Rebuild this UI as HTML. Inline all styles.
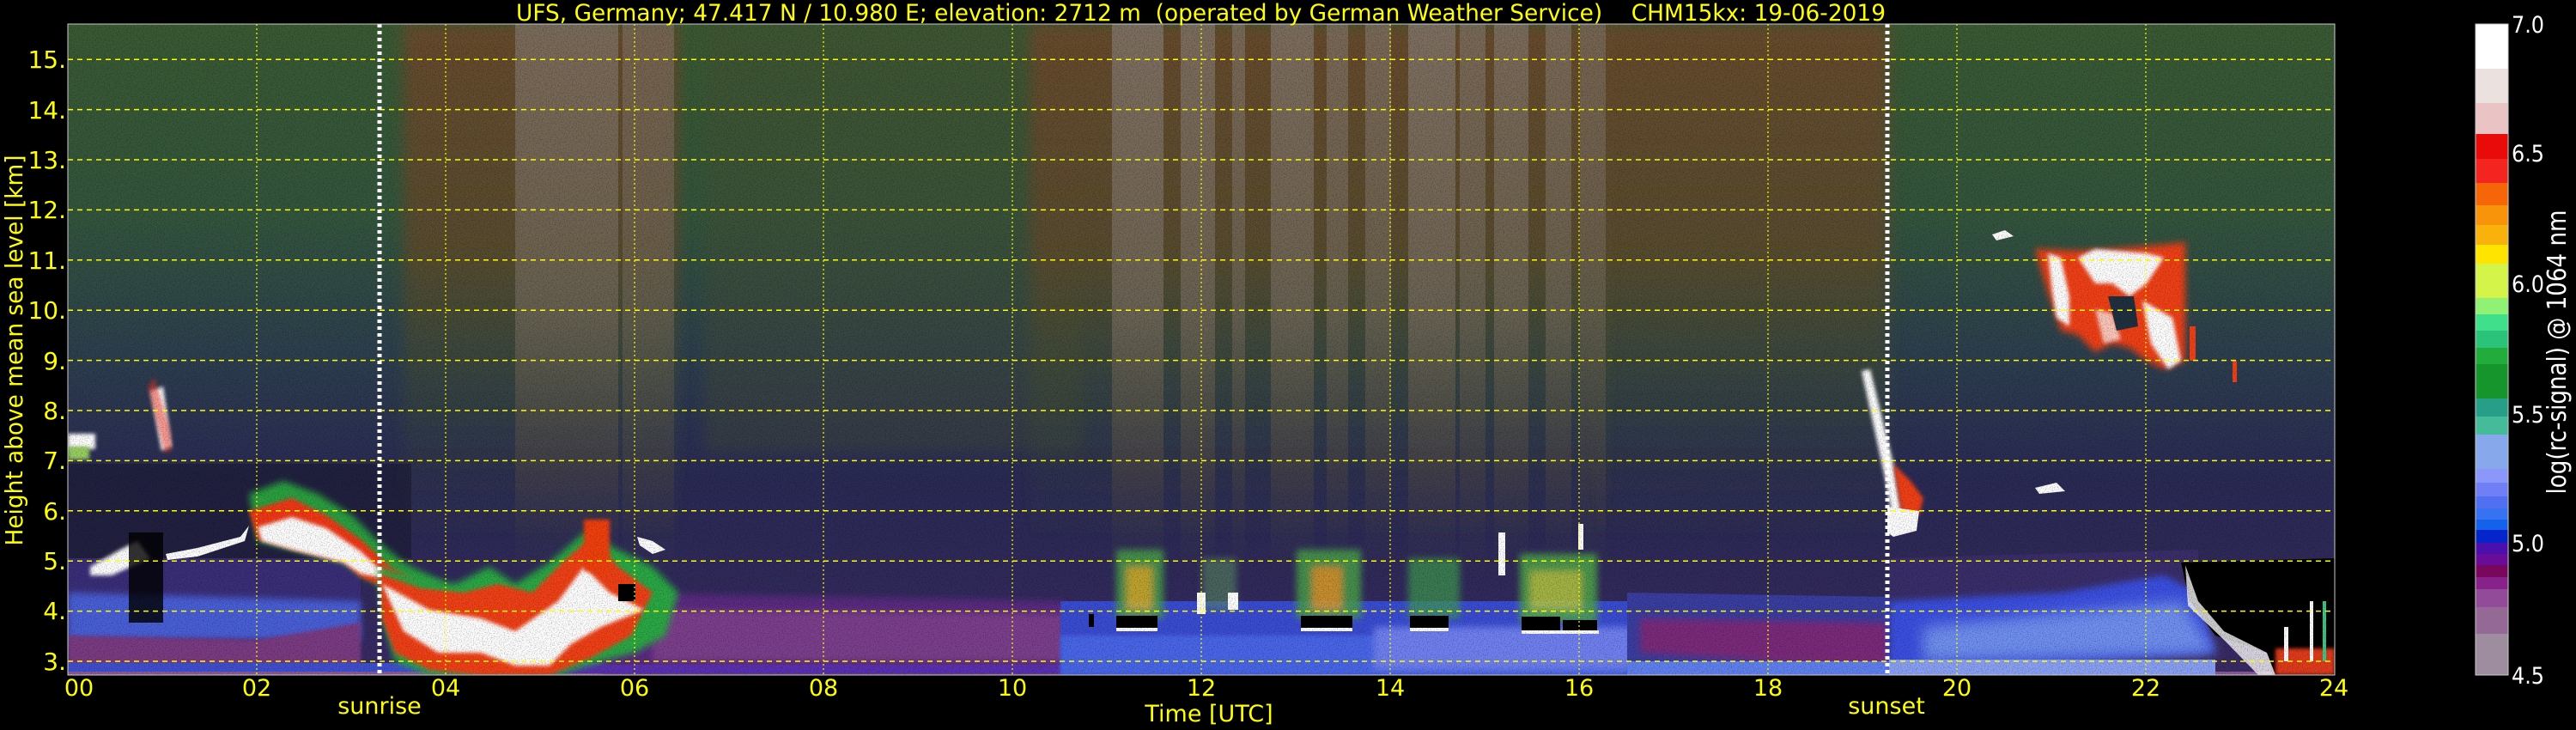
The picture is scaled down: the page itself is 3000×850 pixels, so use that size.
<!DOCTYPE html>
<html><head><meta charset="utf-8"><style>
html,body{margin:0;padding:0;background:#000;width:3000px;height:850px;overflow:hidden}
svg{display:block}
text{font-family:"DejaVu Sans","Liberation Sans",sans-serif}
</style></head><body>
<svg width="3000" height="850" viewBox="0 0 3000 850" xmlns="http://www.w3.org/2000/svg">
<defs>
<linearGradient id="base" x1="0" y1="28" x2="0" y2="786" gradientUnits="userSpaceOnUse">
<stop offset="0" stop-color="#3a5a33"/>
<stop offset="0.3" stop-color="#33553d"/>
<stop offset="0.5" stop-color="#2d404e"/>
<stop offset="0.7" stop-color="#2a2a55"/>
<stop offset="0.85" stop-color="#302a5a"/>
<stop offset="1" stop-color="#3a2a66"/>
</linearGradient>
<linearGradient id="brown" x1="0" y1="28" x2="0" y2="786" gradientUnits="userSpaceOnUse">
<stop offset="0" stop-color="#6a4a2c" stop-opacity="0.95"/>
<stop offset="0.35" stop-color="#5e4a2c" stop-opacity="0.85"/>
<stop offset="0.6" stop-color="#40502e" stop-opacity="0.3"/>
<stop offset="0.8" stop-color="#40502e" stop-opacity="0"/>
</linearGradient>
<linearGradient id="gray" x1="0" y1="28" x2="0" y2="786" gradientUnits="userSpaceOnUse">
<stop offset="0" stop-color="#857a70" stop-opacity="0.9"/>
<stop offset="0.45" stop-color="#7a6e62" stop-opacity="0.8"/>
<stop offset="0.7" stop-color="#6a5a40" stop-opacity="0.35"/>
<stop offset="0.85" stop-color="#405040" stop-opacity="0"/>
</linearGradient>
<filter id="b2" x="-20%" y="-20%" width="140%" height="140%"><feGaussianBlur stdDeviation="2"/></filter>
<filter id="b4" x="-20%" y="-20%" width="140%" height="140%"><feGaussianBlur stdDeviation="4"/></filter>
<filter id="b8" x="-20%" y="-20%" width="140%" height="140%"><feGaussianBlur stdDeviation="8"/></filter>
<filter id="noise" x="0" y="0" width="1" height="1">
<feTurbulence type="fractalNoise" baseFrequency="0.8" numOctaves="1" seed="3"/>
<feColorMatrix values="0 0 0 0 0  0 0 0 0 0  0 0 0 0 0  -2 0 0 0 1.1"/>
</filter>
<clipPath id="plot"><rect x="79" y="28" width="2640" height="758"/></clipPath>
</defs>

<g clip-path="url(#plot)">
<rect x="79" y="28" width="2640" height="758" fill="url(#base)"/>
<rect x="820" y="28" width="440" height="500" fill="#4a5030" opacity="0.35" filter="url(#b8)"/>
<rect x="470" y="28" width="320" height="758" fill="url(#brown)" filter="url(#b8)"/>
<rect x="1860" y="28" width="340" height="758" fill="url(#brown)" filter="url(#b8)"/>
<rect x="1200" y="28" width="670" height="758" fill="url(#brown)" filter="url(#b8)"/>
<g fill="url(#gray)">
<rect x="600" y="28" width="120" height="758" opacity="0.75"/>
<rect x="725" y="28" width="60" height="758" opacity="0.6"/>
<rect x="1295" y="28" width="60" height="758" opacity="0.85"/>
<rect x="1375" y="28" width="40" height="758" opacity="0.8"/>
<rect x="1435" y="28" width="15" height="758" opacity="0.7"/>
<rect x="1480" y="28" width="50" height="758" opacity="0.8"/>
<rect x="1545" y="28" width="25" height="758" opacity="0.7"/>
<rect x="1590" y="28" width="30" height="758" opacity="0.7"/>
<rect x="1640" y="28" width="55" height="758" opacity="0.85"/>
<rect x="1700" y="28" width="30" height="758" opacity="0.7"/>
<rect x="1740" y="28" width="40" height="758" opacity="0.75"/>
<rect x="1800" y="28" width="30" height="758" opacity="0.7"/>
<rect x="1840" y="28" width="30" height="758" opacity="0.6"/>
</g>
<polygon points="79,650 420,650 420,786 79,786" fill="#3a2e78"/>
<polygon points="79,690 420,700 420,745 79,745" fill="#4a5ed6" filter="url(#b4)"/>
<polygon points="79,740 300,745 420,725 420,775 79,775" fill="#7a3a82" filter="url(#b2)"/>
<rect x="79" y="772" width="700" height="14" fill="#3e50d0"/>
<rect x="79" y="782" width="2640" height="4" fill="#8a5a9a"/>
<polygon points="700,690 1240,700 1240,786 700,786" fill="#5a2a80" filter="url(#b4)"/>
<polygon points="760,710 1240,715 1240,770 760,770" fill="#8a4a92" opacity="0.7" filter="url(#b4)"/>
<rect x="640" y="774" width="1600" height="10" fill="#5a30b0"/>
<rect x="1235" y="700" width="660" height="86" fill="#3a4cd2"/>
<rect x="1235" y="740" width="660" height="46" fill="#4a66e8" filter="url(#b2)"/>
<rect x="1600" y="730" width="300" height="50" fill="#7080f0" filter="url(#b4)"/>
<polygon points="1895,690 2200,695 2200,786 1895,786" fill="#3a3ea0"/>
<polygon points="1910,720 2200,725 2200,780 1910,760" fill="#7a2a7a" filter="url(#b4)"/>
<rect x="1895" y="770" width="320" height="16" fill="#6080f0"/>
<polygon points="2200,650 2560,640 2560,786 2200,786" fill="#3a2e6a"/>
<polygon points="2200,700 2400,690 2520,670 2560,690 2580,760 2200,786" fill="#3a50e0" filter="url(#b4)"/>
<polygon points="2240,730 2540,700 2580,760 2240,770" fill="#7090f0" filter="url(#b8)"/>
<rect x="2200" y="768" width="380" height="18" fill="#8aa0f4"/>
<polygon points="2540,655 2719,650 2719,786 2650,786 2640,760 2580,740 2550,700" fill="#000"/>
<polygon points="2545,658 2560,700 2590,735 2640,760 2650,786 2630,786 2590,745 2548,705" fill="#fff" opacity="0.8"/>
<rect x="2650" y="755" width="69" height="31" fill="#e03a1a" filter="url(#b2)"/>
<rect x="2660" y="730" width="5" height="40" fill="#fff"/><rect x="2690" y="700" width="4" height="70" fill="#fff"/><rect x="2705" y="700" width="4" height="70" fill="#3c8"/>

<rect x="79" y="505" width="32" height="18" fill="#fff" filter="url(#b2)"/>
<rect x="79" y="520" width="25" height="15" fill="#9ad060" filter="url(#b2)"/>
<polygon points="175,455 190,450 200,520 188,525" fill="#fff" filter="url(#b2)"/>
<polygon points="172,450 180,440 198,500 200,525 192,528" fill="#f03020" opacity="0.5" filter="url(#b2)"/>
<rect x="79" y="540" width="400" height="110" fill="#1a1a30" opacity="0.6"/>
<polygon points="105,660 140,640 160,630 175,650 130,670 105,670" fill="#fff" filter="url(#b2)"/>
<polygon points="193,645 230,638 280,625 290,612 285,630 230,648 195,652" fill="#fff"/>
<rect x="150" y="620" width="40" height="105" fill="#000" opacity="0.8"/>
<polygon points="290,575 330,560 370,575 410,600 440,630 470,655 520,680 460,690 420,670 400,655 340,640 300,630" fill="#2ca040" filter="url(#b4)"/>
<polygon points="290,595 340,580 380,600 420,628 455,660 500,685 460,690 420,672 400,655 340,640 300,628" fill="#f03818" filter="url(#b2)"/>
<polygon points="300,614 340,602 380,615 420,642 455,675 420,668 400,655 340,640 305,630" fill="#fff" filter="url(#b2)"/>
<polygon points="440,660 480,670 530,680 570,660 600,680 640,655 680,620 720,640 760,660 790,690 775,740 740,760 700,770 650,786 560,786 500,786 460,770 445,720" fill="#2ca844" filter="url(#b4)"/>
<polygon points="442,668 490,685 540,690 580,680 620,690 660,650 690,625 720,660 760,690 735,740 690,765 640,786 560,786 500,780 460,760 445,720" fill="#f04018" filter="url(#b2)"/>
<polygon points="445,680 500,710 560,720 600,735 650,700 680,660 710,690 750,710 700,730 665,750 640,775 600,775 560,760 510,760 470,735" fill="#fff" filter="url(#b2)"/>
<rect x="680" y="605" width="30" height="60" fill="#f04010" filter="url(#b2)"/>
<polygon points="742,625 760,630 775,640 760,645 745,635" fill="#fff"/>
<rect x="720" y="680" width="20" height="20" fill="#000"/>
<g filter="url(#b4)" opacity="0.85">
<rect x="1300" y="640" width="55" height="80" fill="#4aa048"/>
<rect x="1312" y="660" width="30" height="50" fill="#d8b828"/>
<rect x="1510" y="640" width="75" height="80" fill="#4aa048"/>
<rect x="1528" y="660" width="35" height="50" fill="#e0a028"/>
<rect x="1770" y="645" width="90" height="80" fill="#50a848"/>
<rect x="1782" y="665" width="60" height="45" fill="#b8cc40"/>
<rect x="1640" y="650" width="60" height="70" fill="#40a050" opacity="0.8"/>
<rect x="1400" y="650" width="40" height="60" fill="#5a8a60" opacity="0.7"/>
</g>
<g fill="#000">
<rect x="1300" y="717" width="48" height="14"/>
<rect x="1515" y="717" width="60" height="14"/>
<rect x="1642" y="717" width="45" height="14"/>
<rect x="1772" y="718" width="45" height="16"/>
<rect x="1820" y="722" width="40" height="14"/>
<rect x="1268" y="715" width="6" height="15"/>
</g>
<g fill="#fff">
<rect x="1300" y="731" width="48" height="4"/>
<rect x="1515" y="731" width="60" height="4"/>
<rect x="1642" y="731" width="45" height="4"/>
<rect x="1772" y="734" width="90" height="4"/>
<rect x="1745" y="620" width="8" height="50"/>
<rect x="1838" y="610" width="6" height="30"/>
<rect x="1394" y="690" width="10" height="25"/>
<rect x="1430" y="690" width="12" height="20"/>
</g>
<polygon points="2168,432 2178,430 2205,540 2215,600 2205,610 2196,560" fill="#fff" filter="url(#b2)"/>
<polygon points="2205,540 2225,560 2240,580 2235,600 2215,600" fill="#f04018" filter="url(#b2)"/>
<polygon points="2198,590 2235,595 2232,618 2205,625 2198,620" fill="#fff"/>
<polygon points="2320,273 2335,268 2345,275 2325,280" fill="#fff"/>
<polygon points="2370,568 2395,562 2405,572 2375,575" fill="#fff"/>
<polygon points="2370,290 2420,292 2460,290 2520,285 2545,282 2545,420 2520,430 2500,420 2480,405 2460,400 2440,410 2420,390 2400,385 2385,340" fill="#f04018" filter="url(#b4)"/>
<polygon points="2385,295 2400,300 2410,345 2410,380 2395,370 2390,340" fill="#fff" filter="url(#b2)"/>
<polygon points="2420,300 2440,290 2500,295 2520,300 2500,330 2480,345 2460,330 2440,330" fill="#fff" filter="url(#b2)"/>
<polygon points="2495,350 2530,370 2540,420 2525,430 2505,400" fill="#fff" filter="url(#b2)"/>
<polygon points="2440,360 2460,365 2470,395 2450,400" fill="#fff" opacity="0.7" filter="url(#b2)"/>
<polygon points="2455,345 2485,345 2490,380 2465,385" fill="#203040"/>
<rect x="2550" y="380" width="7" height="40" fill="#f04018"/>
<rect x="2600" y="420" width="5" height="25" fill="#f04018"/>
<rect x="79" y="28" width="2640" height="758" filter="url(#noise)" opacity="0.4" fill="#000"/>
</g>

<g stroke="#ffff00" stroke-width="1.5" stroke-dasharray="6,5" fill="none">
<line x1="79" y1="770" x2="2719" y2="770"/><line x1="79" y1="711.6" x2="2719" y2="711.6"/>
<line x1="79" y1="653.2" x2="2719" y2="653.2"/><line x1="79" y1="594.8" x2="2719" y2="594.8"/>
<line x1="79" y1="536.4" x2="2719" y2="536.4"/><line x1="79" y1="478" x2="2719" y2="478"/>
<line x1="79" y1="419.6" x2="2719" y2="419.6"/><line x1="79" y1="361.2" x2="2719" y2="361.2"/>
<line x1="79" y1="302.8" x2="2719" y2="302.8"/><line x1="79" y1="244.4" x2="2719" y2="244.4"/>
<line x1="79" y1="186" x2="2719" y2="186"/><line x1="79" y1="127.6" x2="2719" y2="127.6"/>
<line x1="79" y1="69.2" x2="2719" y2="69.2"/>
</g>
<g stroke="#ffff00" stroke-width="1.2" stroke-dasharray="2,3" fill="none">
<line x1="299" y1="28" x2="299" y2="786"/><line x1="519" y1="28" x2="519" y2="786"/>
<line x1="739" y1="28" x2="739" y2="786"/><line x1="959" y1="28" x2="959" y2="786"/>
<line x1="1179" y1="28" x2="1179" y2="786"/><line x1="1399" y1="28" x2="1399" y2="786"/>
<line x1="1619" y1="28" x2="1619" y2="786"/><line x1="1839" y1="28" x2="1839" y2="786"/>
<line x1="2059" y1="28" x2="2059" y2="786"/><line x1="2279" y1="28" x2="2279" y2="786"/>
<line x1="2499" y1="28" x2="2499" y2="786"/>
</g>
<g stroke="#fff" stroke-width="5" stroke-dasharray="4,4">
<line x1="442" y1="28" x2="442" y2="786"/><line x1="2198" y1="28" x2="2198" y2="786"/>
</g>
<rect x="79" y="28" width="2640" height="758" fill="none" stroke="#ccc" stroke-width="1"/>

<text x="601" y="24" font-size="27" fill="#ffff00" textLength="1595" lengthAdjust="spacingAndGlyphs" xml:space="preserve">UFS, Germany; 47.417 N / 10.980 E; elevation: 2712 m  (operated by German Weather Service)    CHM15kx: 19-06-2019</text>

<g font-size="28" fill="#ffff00" text-anchor="end">
<text x="77" y="780">3.</text><text x="77" y="721">4.</text><text x="77" y="663">5.</text>
<text x="77" y="605">6.</text><text x="77" y="546">7.</text><text x="77" y="488">8.</text>
<text x="77" y="430">9.</text><text x="77" y="371">10.</text><text x="77" y="313">11.</text>
<text x="77" y="254">12.</text><text x="77" y="196">13.</text><text x="77" y="138">14.</text>
<text x="77" y="79">15.</text>
</g>
<text transform="translate(26,408) rotate(-90)" font-size="28" fill="#ffff00" text-anchor="middle" textLength="455" lengthAdjust="spacingAndGlyphs">Height above mean sea level [km]</text>

<g font-size="27" fill="#ffff00" text-anchor="middle">
<text x="92" y="810">00</text><text x="299" y="810">02</text><text x="519" y="810">04</text>
<text x="739" y="810">06</text><text x="959" y="810">08</text><text x="1179" y="810">10</text>
<text x="1399" y="810">12</text><text x="1619" y="810">14</text><text x="1839" y="810">16</text>
<text x="2059" y="810">18</text><text x="2279" y="810">20</text><text x="2499" y="810">22</text>
<text x="2718" y="810">24</text>
<text x="442" y="831">sunrise</text>
<text x="1408" y="840">Time [UTC]</text>
<text x="2197" y="831">sunset</text>
</g>

<g>
<rect x="2883" y="28" width="38" height="52" fill="#ffffff"/>
<rect x="2883" y="80" width="38" height="40" fill="#ebe1df"/>
<rect x="2883" y="120" width="38" height="36" fill="#eac4c4"/>
<rect x="2883" y="156" width="38" height="29" fill="#e90a0a"/>
<rect x="2883" y="185" width="38" height="28" fill="#f42421"/>
<rect x="2883" y="213" width="38" height="26" fill="#f66508"/>
<rect x="2883" y="239" width="38" height="23" fill="#f89409"/>
<rect x="2883" y="262" width="38" height="23" fill="#f8b20b"/>
<rect x="2883" y="285" width="38" height="22" fill="#ffe400"/>
<rect x="2883" y="307" width="38" height="40" fill="#d5f44a"/>
<rect x="2883" y="347" width="38" height="19" fill="#90f275"/>
<rect x="2883" y="366" width="38" height="19" fill="#3fdf8c"/>
<rect x="2883" y="385" width="38" height="20" fill="#2bc27a"/>
<rect x="2883" y="405" width="38" height="19" fill="#22ac3c"/>
<rect x="2883" y="424" width="38" height="40" fill="#16952d"/>
<rect x="2883" y="464" width="38" height="21" fill="#279e88"/>
<rect x="2883" y="485" width="38" height="21" fill="#45bb9a"/>
<rect x="2883" y="506" width="38" height="40" fill="#87a9eb"/>
<rect x="2883" y="546" width="38" height="16" fill="#8b97fa"/>
<rect x="2883" y="562" width="38" height="16" fill="#707ff6"/>
<rect x="2883" y="578" width="38" height="14" fill="#5170f1"/>
<rect x="2883" y="592" width="38" height="13" fill="#3772f2"/>
<rect x="2883" y="605" width="38" height="12" fill="#1462ec"/>
<rect x="2883" y="617" width="38" height="15" fill="#0524c9"/>
<rect x="2883" y="632" width="38" height="13" fill="#4a0fac"/>
<rect x="2883" y="645" width="38" height="13" fill="#6a0c9a"/>
<rect x="2883" y="658" width="38" height="14" fill="#78075d"/>
<rect x="2883" y="672" width="38" height="14" fill="#87228a"/>
<rect x="2883" y="686" width="38" height="21" fill="#924b98"/>
<rect x="2883" y="707" width="38" height="31" fill="#956996"/>
<rect x="2883" y="738" width="38" height="48" fill="#9d8d9e"/>
<rect x="2883" y="28" width="38" height="758" fill="none" stroke="#ccc" stroke-width="1"/>
</g>
<g font-size="27" fill="#fff">
<text x="2925" y="38" textLength="38" lengthAdjust="spacingAndGlyphs">7.0</text>
<text x="2925" y="188" textLength="38" lengthAdjust="spacingAndGlyphs">6.5</text>
<text x="2925" y="340" textLength="38" lengthAdjust="spacingAndGlyphs">6.0</text>
<text x="2925" y="492" textLength="38" lengthAdjust="spacingAndGlyphs">5.5</text>
<text x="2925" y="642" textLength="38" lengthAdjust="spacingAndGlyphs">5.0</text>
<text x="2925" y="796" textLength="38" lengthAdjust="spacingAndGlyphs">4.5</text>
</g>
<text transform="translate(2988,410) rotate(-90)" font-size="30" fill="#fff" text-anchor="middle" textLength="331" lengthAdjust="spacingAndGlyphs">log(rc-signal) @ 1064 nm</text>
</svg>
</body></html>
